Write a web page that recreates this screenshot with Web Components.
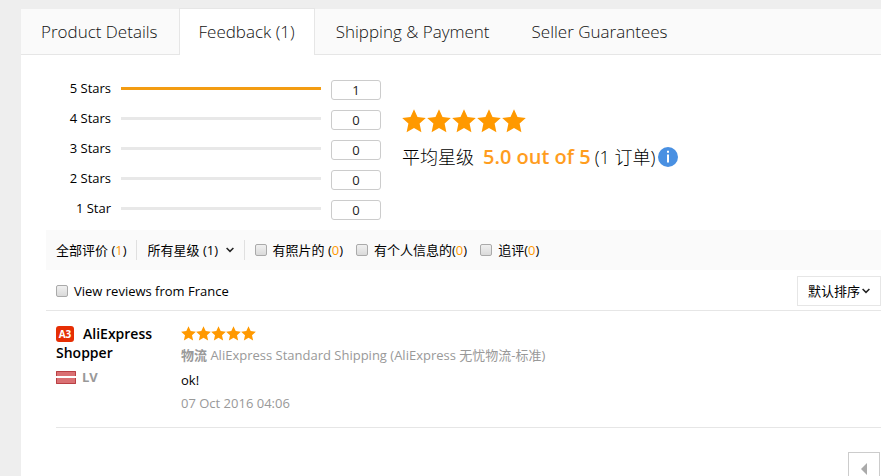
<!DOCTYPE html>
<html lang="en">
<head>
<meta charset="utf-8">
<title>Feedback</title>
<style>
html { background: #eee; scrollbar-width: none; }
body { margin: 0; padding: 8px 0 0 21px; font: 13px/20px "Open Sans", "Noto Sans CJK SC", sans-serif; color: #000; }
</style>
</head>
<body>
<feedback-page></feedback-page>
<script>
const define = (name, html, setup) => {
  const template = document.createElement('template');
  template.innerHTML = html;
  customElements.define(name, class extends HTMLElement {
    connectedCallback() {
      if (this.shadowRoot) return;
      this.attachShadow({ mode: 'open' }).append(template.content.cloneNode(true));
      if (setup) setup(this, this.shadowRoot);
    }
  });
};

define('tab-bar', `
<style>
:host { display: block; padding-top: 1px; }
nav { display: flex; background: #fafafa; border-bottom: 1px solid #e6e6e6; height: 45px; }
::slotted(a) { box-sizing: border-box; padding: 0 21px; line-height: 46px; font-size: 17px; font-weight: 300; color: #111; text-decoration: none; white-space: nowrap; }
::slotted(a:first-child) { padding: 0 21px 0 20px; }
::slotted(a[aria-current]) { margin: -1px 0; padding: 0 19px; border: 1px solid #e6e6e6; border-bottom: 0; background: #fff; line-height: 45px; }
</style>
<nav><slot></slot></nav>`);

define('star-row', `
<style>
:host { display: flex; gap: 1px; --size: 24px; color: #ff9900; }
:host([small]) { --size: 15px; gap: 0; }
svg { width: var(--size); height: var(--size); fill: currentColor; display: block; }
</style>`, (host, root) => {
  host.setAttribute('role', 'img');
  host.setAttribute('aria-label', '5 stars');
  for (let i = 0; i < 5; i++) {
    root.append(Object.assign(document.createElement('template'), {
      innerHTML: '<svg viewBox="0 0 24 24"><path d="M12 .3 15.5 8 23.8 9 17.6 14.6 19.4 23.2 12 18.9 4.6 23.2 6.4 14.6.2 9 8.5 8Z"/></svg>'
    }).content);
  }
});

define('rating-row', `
<style>
:host { display: flex; gap: 10px; height: 20px; }
.label { width: 65px; text-align: right; line-height: 17px; }
.bar { width: 200px; height: 3px; margin-top: 7px; background: #e8e8e8; }
:host([full]) .bar { background: #f39c12; }
button { width: 50px; height: 20px; box-sizing: border-box; padding: 0; border: 1px solid #ccc; border-radius: 3px; background: #fff; font: inherit; line-height: 18px; color: #222; }
</style>
<span class="label" id="l"><slot></slot></span><div class="bar"></div><button type="button" aria-describedby="l"></button>`,
(host, root) => { root.querySelector('button').textContent = host.getAttribute('count'); });

define('rating-summary', `
<style>
:host { display: block; }
p { display: flex; align-items: center; margin: 13px 0 0; font-size: 18px; line-height: 22px; white-space: nowrap; color: #222; }
span { font-weight: 300; color: #000; }
strong { font-size: 20px; font-weight: 600; color: #ff9d1e; margin: 0 4px 0 9px; }
svg { width: 20px; height: 20px; margin-left: 3px; }
</style>
<star-row></star-row>
<p><span>平均星级</span><strong>5.0 out of 5</strong><span>(1 订单)</span><svg viewBox="0 0 20 20" role="img" aria-label="Info"><circle cx="10" cy="10" r="10" fill="#4990e2"/><path d="M9 3.7h2v2H9zM9 7.5h2v8H9z" fill="#fff"/></svg></p>`);

define('check-option', `
<style>
:host { display: block; }
label { display: flex; align-items: center; gap: 6px; white-space: nowrap; }
input { appearance: none; box-sizing: border-box; width: 12px; height: 12px; margin: 0; border: 1px solid #aaa; border-radius: 2px; background: linear-gradient(#f0f0f0, #dadada); }
</style>
<label><input type="checkbox"><span><slot></slot></span></label>`);

define('drop-down', `
<style>
:host { display: grid; align-items: center; box-sizing: border-box; }
:host([boxed]) { border: 1px solid #e6e6e6; background: #fff; height: 30px; }
select, svg { grid-area: 1 / 1; }
select { appearance: none; border: 0; margin: 0; padding: 0 15px 0 0; background: none; font: inherit; line-height: 20px; color: #000; }
:host([boxed]) select { padding: 0 19px 0 10px; height: 28px; }
svg { justify-self: end; width: 8px; height: 6px; pointer-events: none; fill: none; stroke: #222; stroke-width: 1.5; }
:host([boxed]) svg { margin-right: 10px; }
</style>
<select><option></option></select><svg viewBox="0 0 8 6"><path d="M.6 1 4 4.4 7.4 1"/></svg>`,
(host, root) => {
  root.querySelector('option').textContent = host.getAttribute('value');
  root.querySelector('select').setAttribute('aria-label', host.getAttribute('label'));
});

define('filter-bar', `
<style>
:host { display: flex; align-items: center; height: 40px; padding-left: 10px; background: #fafafa; white-space: nowrap; }
a { color: inherit; text-decoration: none; }
i { font-style: normal; color: #f90; }
.sep { width: 1px; height: 20px; background: #e0e0e0; }
.first { margin: 0 11px 0 9px; }
.second { margin: 0 10px; }
check-option + check-option { margin-left: 13px; }
</style>
<a href="#all">全部评价 (<i>1</i>)</a><span class="sep first"></span>
<drop-down value="所有星级 (1)" label="Stars"></drop-down><span class="sep second"></span>
<check-option>有照片的 (<i>0</i>)</check-option>
<check-option>有个人信息的(<i>0</i>)</check-option>
<check-option>追评(<i>0</i>)</check-option>`);

define('sort-bar', `
<style>
:host { display: flex; align-items: center; justify-content: space-between; height: 41px; padding: 1px 0 0 10px; box-sizing: border-box; border-bottom: 1px solid #e6e6e6; }
</style>
<check-option>View reviews from France</check-option><drop-down boxed value="默认排序" label="Sort"></drop-down>`);

define('review-item', `
<style>
:host { display: flex; margin-left: 10px; padding: 13px 0 14px; border-bottom: 1px solid #e6e6e6; }
.user { width: 125px; padding-right: 15px; box-sizing: border-box; }
.user a { color: inherit; text-decoration: none; font-size: 14px; font-weight: 600; line-height: 19px; display: flex; flex-wrap: wrap; }
.badge { width: 18px; height: 16px; margin: 2px 9px 0 0; border-radius: 3px; background: #e62e04; color: #fff; font: 700 10px/16px "Open Sans", sans-serif; text-align: center; }
.country { display: flex; align-items: center; gap: 6px; margin-top: 6px; line-height: 19px; color: #999; font-weight: 700; }
.country svg { width: 20px; height: 13px; }
.body { flex: 1; color: #999; }
.body p { margin: 0; line-height: 20px; }
star-row { margin: 2px 0 4px; }
.body .text { color: #000; margin: 5px 0 3px; }
b { font-weight: 700; }
</style>
<div class="user"><a href="#user"><span class="badge">A3</span><span>AliExpress</span> <span>Shopper</span></a>
<div class="country"><svg viewBox="0 0 20 13" role="img" aria-label="Latvia"><path fill="#da7073" d="M0 0h20v13H0z"/><path fill="none" stroke="#b94044" d="M.5.5h19v12H.5z"/><path fill="#fff" d="M0 5h20v2H0z"/></svg>LV</div></div>
<div class="body"><star-row small></star-row>
<p><b>物流</b> AliExpress Standard Shipping (AliExpress 无忧物流-标准)</p>
<p class="text">ok!</p><p>07 Oct 2016 04:06</p></div>`);

define('page-nav', `
<style>
:host { display: flex; justify-content: flex-end; padding: 24px 1px 0 0; }
button { width: 32px; height: 34px; padding: 0; border: 1px solid #ccc; background: #fff; display: grid; place-items: center; }
svg { width: 6px; height: 12px; fill: #aaa; }
</style>
<button type="button" aria-label="Previous page"><svg viewBox="0 0 6 12"><path d="M6 0v12L0 6Z"/></svg></button>`);

define('feedback-page', `
<style>
:host { display: block; }
main { background: #fff; padding: 25px 0 0 25px; }
.rating { display: flex; gap: 21px; margin-bottom: 10px; }
.bars { display: grid; gap: 10px; }
rating-summary { margin-top: 29px; }
</style>
<tab-bar><a href="#details">Product Details</a><a href="#feedback" aria-current="page">Feedback (1)</a><a href="#shipping">Shipping &amp; Payment</a><a href="#guarantees">Seller Guarantees</a></tab-bar>
<main>
<section class="rating">
<div class="bars">
<rating-row full count="1">5 Stars</rating-row><rating-row count="0">4 Stars</rating-row><rating-row count="0">3 Stars</rating-row><rating-row count="0">2 Stars</rating-row><rating-row count="0">1 Star</rating-row>
</div>
<rating-summary></rating-summary>
</section>
<filter-bar></filter-bar>
<sort-bar></sort-bar>
<review-item></review-item>
<page-nav></page-nav>
</main>`);
</script>
</body>
</html>
